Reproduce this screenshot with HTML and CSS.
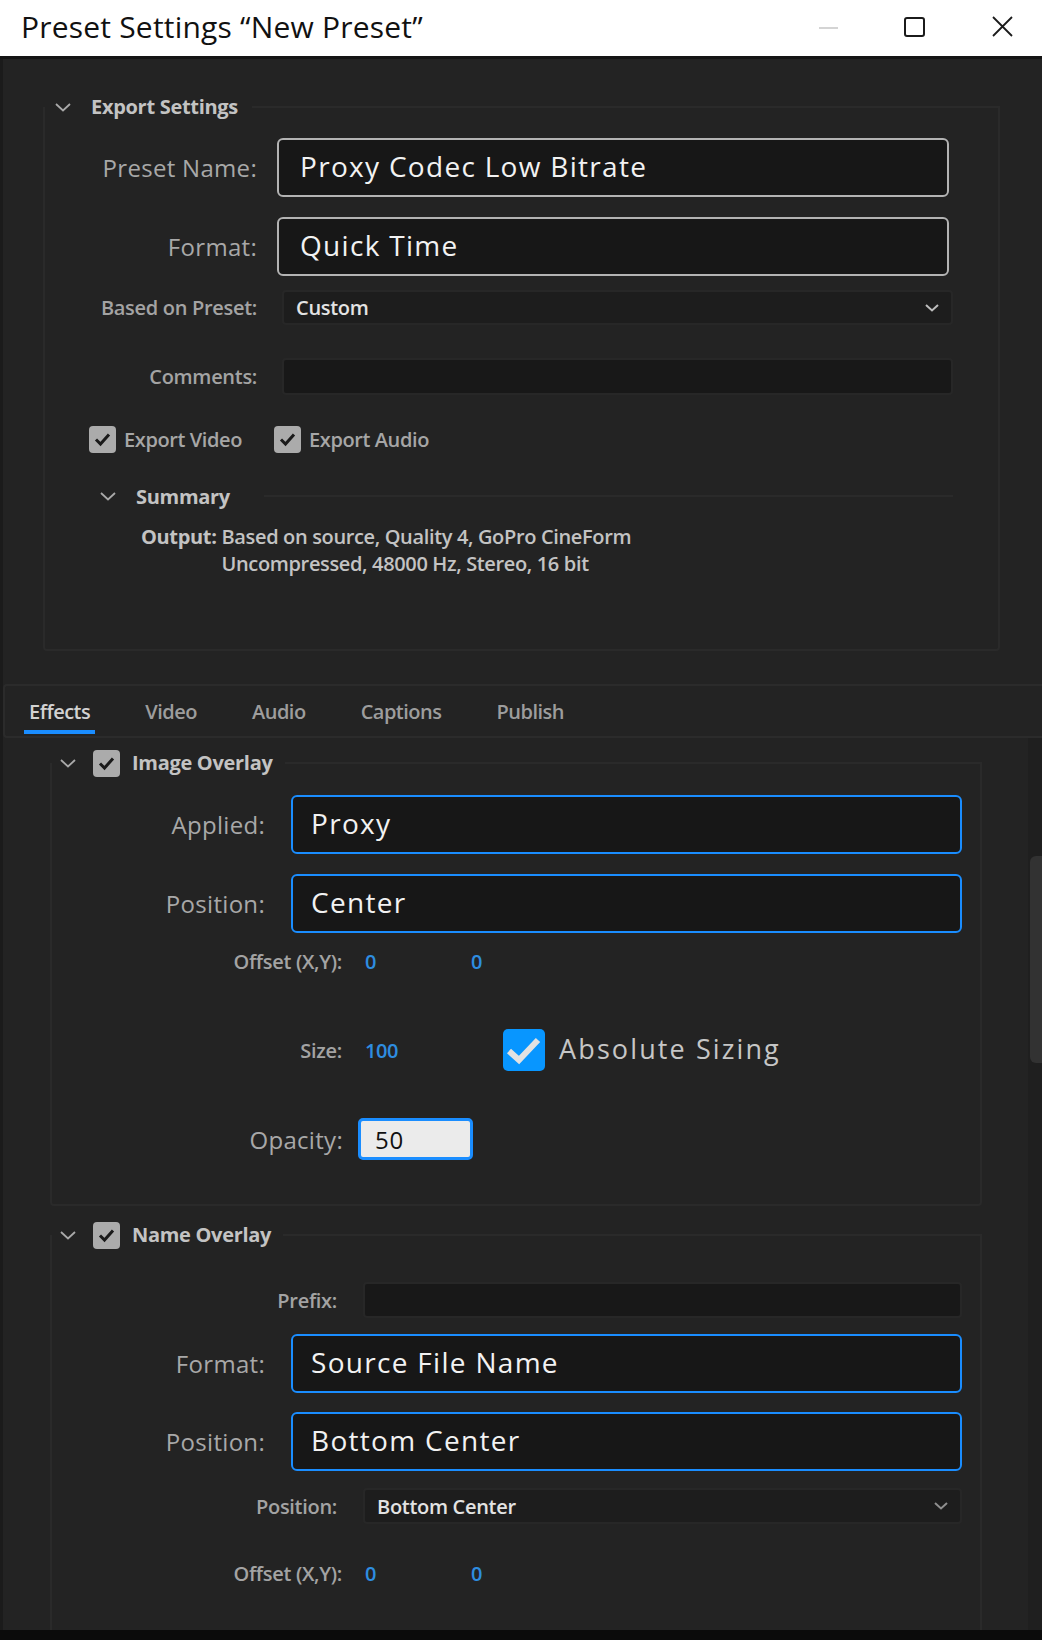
FILE: index.html
```html
<!DOCTYPE html>
<html lang="en">
<head>
<meta charset="utf-8">
<title>Preset Settings</title>
<link rel="stylesheet" href="styles.css">
</head>
<body>
<div class="window">
  <header class="titlebar">
    <div class="title">Preset Settings “New Preset”</div>
    <div class="controls">
      <svg class="ctl ctl-min" width="20" height="20" viewBox="0 0 20 20"><line x1="0" y1="11" x2="19" y2="11" stroke="#c9c9c9" stroke-width="1.6"/></svg>
      <svg class="ctl ctl-max" width="21" height="20" viewBox="0 0 21 20"><rect x="1" y="1" width="19" height="18" rx="2" fill="none" stroke="#1b1b1b" stroke-width="2"/></svg>
      <svg class="ctl ctl-close" width="21" height="21" viewBox="0 0 21 21"><path d="M1 1 L20 20 M20 1 L1 20" stroke="#1b1b1b" stroke-width="1.8" fill="none"/></svg>
    </div>
  </header>

  <main class="content">
    <section class="group export">
      <div class="group-head">
        <svg class="chev" width="16" height="9" viewBox="0 0 16 9"><path d="M1 1 L8 7.5 L15 1" fill="none" stroke="#a9a9a9" stroke-width="1.8"/></svg>
        <span class="group-title">Export Settings</span>
        <span class="rule"></span>
      </div>
      <div class="group-box export-box">
        <div class="row">
          <span class="lbl lbl-lg">Preset Name:</span>
          <div class="field-lg field-gray">Proxy Codec Low Bitrate</div>
        </div>
        <div class="row r-format">
          <span class="lbl lbl-lg">Format:</span>
          <div class="field-lg field-gray">Quick Time</div>
        </div>
        <div class="row r-based">
          <span class="lbl lbl-sm">Based on Preset:</span>
          <div class="field-sm select">
            <span class="sel-text">Custom</span>
            <svg class="sel-chev" width="14" height="8" viewBox="0 0 14 8"><path d="M1 1 L7 6.5 L13 1" fill="none" stroke="#bdbdbd" stroke-width="2"/></svg>
          </div>
        </div>
        <div class="row r-comments">
          <span class="lbl lbl-sm">Comments:</span>
          <div class="field-sm comments"></div>
        </div>
        <div class="row r-checks">
          <label class="chk-item">
            <span class="chk"><svg width="27" height="27" viewBox="0 0 27 27"><path d="M7 13.5 L11.5 18 L20 8.5" fill="none" stroke="#1a1a1a" stroke-width="3"/></svg></span>
            <span class="chk-text">Export Video</span>
          </label>
          <label class="chk-item chk-audio">
            <span class="chk"><svg width="27" height="27" viewBox="0 0 27 27"><path d="M7 13.5 L11.5 18 L20 8.5" fill="none" stroke="#1a1a1a" stroke-width="3"/></svg></span>
            <span class="chk-text">Export Audio</span>
          </label>
        </div>
        <div class="sub-head">
          <svg class="chev" width="16" height="9" viewBox="0 0 16 9"><path d="M1 1 L8 7.5 L15 1" fill="none" stroke="#a9a9a9" stroke-width="1.8"/></svg>
          <span class="sub-title">Summary</span>
          <span class="rule sub-rule"></span>
        </div>
        <div class="summary">
          <span class="sum-key">Output:</span>
          <div class="sum-val">
            <div>Based on source, Quality 4, GoPro CineForm</div>
            <div>Uncompressed, 48000 Hz, Stereo, 16 bit</div>
          </div>
        </div>
      </div>
    </section>

    <nav class="tabs">
      <span class="tab active">Effects</span>
      <span class="tab">Video</span>
      <span class="tab">Audio</span>
      <span class="tab">Captions</span>
      <span class="tab">Publish</span>
    </nav>

    <div class="pane">
      <div class="pane-inner">
        <section class="group fx">
          <div class="group-head fx-head">
            <svg class="chev" width="16" height="9" viewBox="0 0 16 9"><path d="M1 1 L8 7.5 L15 1" fill="none" stroke="#a9a9a9" stroke-width="1.8"/></svg>
            <span class="chk head-chk"><svg width="27" height="27" viewBox="0 0 27 27"><path d="M7 13.5 L11.5 18 L20 8.5" fill="none" stroke="#1a1a1a" stroke-width="3"/></svg></span>
            <span class="group-title fx-title">Image Overlay</span>
            <span class="rule"></span>
          </div>
          <div class="group-box img-box">
            <div class="row">
              <span class="lbl lbl-lg lw-lg">Applied:</span>
              <div class="field-lg field-blue">Proxy</div>
            </div>
            <div class="row r-gap20">
              <span class="lbl lbl-lg lw-lg">Position:</span>
              <div class="field-lg field-blue">Center</div>
            </div>
            <div class="row r-offset">
              <span class="lbl lbl-sm lw-sm">Offset (X,Y):</span>
              <span class="num">0</span>
              <span class="num num2">0</span>
            </div>
            <div class="row r-size">
              <span class="lbl lbl-sm lw-sm">Size:</span>
              <span class="num">100</span>
              <span class="bchk"><svg width="42" height="42" viewBox="0 0 42 42"><path d="M6 22 L16 31 L35 11" fill="none" stroke="#e2e2e2" stroke-width="6"/></svg></span>
              <span class="bchk-text">Absolute Sizing</span>
            </div>
            <div class="row r-opacity">
              <span class="lbl lbl-lg lw-op">Opacity:</span>
              <div class="opacity-input">50</div>
            </div>
          </div>
        </section>

        <section class="group fx name-group">
          <div class="group-head fx-head">
            <svg class="chev" width="16" height="9" viewBox="0 0 16 9"><path d="M1 1 L8 7.5 L15 1" fill="none" stroke="#a9a9a9" stroke-width="1.8"/></svg>
            <span class="chk head-chk"><svg width="27" height="27" viewBox="0 0 27 27"><path d="M7 13.5 L11.5 18 L20 8.5" fill="none" stroke="#1a1a1a" stroke-width="3"/></svg></span>
            <span class="group-title fx-title">Name Overlay</span>
            <span class="rule"></span>
          </div>
          <div class="group-box name-box">
            <div class="row">
              <span class="lbl lbl-sm lw-pre">Prefix:</span>
              <div class="field-sm2 comments"></div>
            </div>
            <div class="row r-gap16">
              <span class="lbl lbl-lg lw-lg">Format:</span>
              <div class="field-lg field-blue">Source File Name</div>
            </div>
            <div class="row r-gap19">
              <span class="lbl lbl-lg lw-lg">Position:</span>
              <div class="field-lg field-blue">Bottom Center</div>
            </div>
            <div class="row r-gap17">
              <span class="lbl lbl-sm lw-pre">Position:</span>
              <div class="field-sm2 select">
                <span class="sel-text">Bottom Center</span>
                <svg class="sel-chev" width="14" height="8" viewBox="0 0 14 8"><path d="M1 1 L7 6.5 L13 1" fill="none" stroke="#8f8f8f" stroke-width="2"/></svg>
              </div>
            </div>
            <div class="row r-offset2">
              <span class="lbl lbl-sm lw-sm">Offset (X,Y):</span>
              <span class="num">0</span>
              <span class="num num2">0</span>
            </div>
          </div>
        </section>
      </div>
      <div class="scrollbar"><div class="thumb"></div></div>
    </div>
  </main>
  <div class="bottom-bar"></div>
</div>
</body>
</html>
```

FILE: styles.css
```css
* { box-sizing: border-box; }
html, body { margin: 0; padding: 0; }
body {
  background: #232323;
  font-family: "Open Sans", "Noto Sans", sans-serif;
}
.window {
  width: 1042px;
  height: 1640px;
  display: flex;
  flex-direction: column;
  overflow: hidden;
  background: #232323;
}

/* title bar */
.titlebar {
  height: 59px;
  flex: none;
  background: #ffffff;
  border-bottom: 3px solid #151515;
  display: flex;
  align-items: center;
  padding-left: 21px;
}
.title {
  flex: 1;
  font-size: 30px;
  color: #111;
  letter-spacing: 0.2px;
  margin-top: -3px;
}
.controls {
  display: flex;
  align-items: center;
  padding-right: 29px;
  margin-top: -3px;
}
.ctl { display: block; }
.ctl-min { margin-right: 65px; }
.ctl-max { margin-right: 67px; }

/* main content */
.content {
  flex: 1;
  min-height: 0;
  display: flex;
  flex-direction: column;
  border-left: 3px solid #1b1b1b;
}
.bottom-bar {
  height: 10px;
  flex: none;
  background: #0b0b0b;
}

/* groups */
.group-head {
  display: flex;
  align-items: center;
  height: 24px;
  padding-left: 12px;
  position: relative;
}
.chev { display: block; flex: none; }
.group-title {
  margin-left: 20px;
  font-weight: 700;
  font-size: 20px;
  color: #c3c3c3;
  letter-spacing: -0.3px;
  white-space: nowrap;
  padding-bottom: 2px;
}
.rule {
  flex: 1;
  height: 2px;
  background: #2a2a2a;
  margin-left: 14px;
}
.group-box {
  margin-top: -12px;
  border: 2px solid #2a2a2a;
  border-top: none;
  border-radius: 0 0 4px 4px;
}
.export { margin: 36px 42px 0 40px; }
.export-box { padding: 31px 0 72px; }

.row { display: flex; align-items: center; }
.lbl {
  flex: none;
  text-align: right;
  white-space: nowrap;
}
.lbl-lg {
  width: 212px;
  font-size: 24px;
  color: #a8a8a8;
  letter-spacing: 0.3px;
}
.lbl-sm {
  width: 212px;
  font-size: 20px;
  font-weight: 600;
  color: #a3a3a3;
  letter-spacing: -0.3px;
}
.field-lg {
  margin-left: 20px;
  width: 672px;
  height: 59px;
  border-radius: 6px;
  background: #171717;
  display: flex;
  align-items: center;
  padding-left: 21px;
  padding-bottom: 3px;
  font-size: 28px;
  color: #f2f2f2;
  letter-spacing: 1.3px;
}
.field-gray { border: 2px solid #b3b3b3; }
.field-blue { border: 2px solid #1a8dff; }
.field-sm {
  margin-left: 25px;
  width: 671px;
  height: 35px;
  border: 2px solid #272727;
  border-radius: 4px;
  background: #1d1d1d;
  display: flex;
  align-items: center;
  justify-content: space-between;
  padding: 0 12px;
}
.field-sm.comments { height: 37px; background: #181818; }
.sel-text {
  font-size: 20px;
  font-weight: 600;
  color: #e3e3e3;
  letter-spacing: -0.3px;
}
.sel-chev { display: block; }
.r-format { margin-top: 20px; }
.r-based { margin-top: 14px; }
.r-comments { margin-top: 33px; }
.r-checks { margin-top: 31px; padding-left: 44px; }

.chk-item { display: flex; align-items: center; }
.chk-audio { margin-left: 32px; }
.chk {
  width: 27px;
  height: 27px;
  flex: none;
  background: #ababab;
  border-radius: 4px;
  display: block;
}
.chk svg { display: block; }
.chk-text {
  margin-left: 8px;
  font-size: 20px;
  font-weight: 600;
  color: #a6a6a6;
  letter-spacing: -0.4px;
}

.sub-head {
  display: flex;
  align-items: center;
  height: 24px;
  margin-top: 31px;
  padding-left: 55px;
  margin-right: 45px;
}
.sub-title {
  margin-left: 20px;
  font-weight: 700;
  font-size: 20px;
  color: #c3c3c3;
  letter-spacing: -0.3px;
}
.sub-rule { margin-left: 34px; }
.summary {
  display: flex;
  margin-top: 15px;
  padding-left: 96px;
  font-size: 20px;
  line-height: 27px;
  font-weight: 600;
  letter-spacing: -0.35px;
  color: #c3c3c3;
}
.sum-key { font-weight: 700; margin-right: 5px; }

/* tabs */
.tabs {
  margin-top: 33px;
  height: 54px;
  flex: none;
  display: flex;
  gap: 45px;
  border: 2px solid #2b2b2b;
  border-right: none;
  border-radius: 4px 0 0 4px;
  padding-left: 19px;
}
.tab {
  height: 48px;
  padding: 7px 5px 0;
  border-bottom: 4px solid transparent;
  display: flex;
  align-items: center;
  font-size: 20px;
  font-weight: 600;
  color: #9d9d9d;
  letter-spacing: -0.5px;
}
.tab.active {
  color: #d2d2d2;
  border-bottom-color: #1a8dff;
}

/* scrolling pane */
.pane {
  flex: 1;
  min-height: 0;
  display: flex;
}
.pane-inner {
  flex: 1;
  min-width: 0;
  overflow: hidden;
}
.scrollbar {
  width: 14px;
  flex: none;
  background: #1f1f1f;
  padding-top: 118px;
  padding-left: 2px;
}
.thumb {
  height: 207px;
  background: #323232;
  border-radius: 6px 0 0 6px;
}

.fx { margin: 13px 46px 0 47px; }
.fx-head { padding-left: 10px; }
.head-chk { margin-left: 17px; }
.fx-title { margin-left: 12px; }
.fx-head .rule { margin-left: 12px; }
.img-box { padding: 32px 0 44px; }
.lw-lg { width: 213px; }
.fx .field-lg { margin-left: 26px; width: 671px; padding-left: 18px; }
.r-gap20 { margin-top: 20px; }
.r-offset { margin-top: 16px; height: 24px; }
.lw-sm { width: 290px; }
.num {
  margin-left: 23px;
  font-size: 20px;
  font-weight: 600;
  color: #2e8de0;
  letter-spacing: -0.4px;
}
.num2 { margin-left: 95px; }
.r-size { margin-top: 56px; height: 42px; }
.bchk {
  margin-left: 105px;
  width: 42px;
  height: 42px;
  flex: none;
  background: #0896ff;
  border-radius: 5px;
  display: block;
}
.bchk svg { display: block; }
.bchk-text {
  margin-left: 14px;
  font-size: 27px;
  color: #c6c6c6;
  letter-spacing: 2.1px;
  padding-bottom: 3px;
}
.r-opacity { margin-top: 47px; }
.lw-op { width: 291px; }
.opacity-input {
  margin-left: 15px;
  width: 115px;
  height: 42px;
  border: 3px solid #1a8dff;
  border-radius: 5px;
  background: #ebebeb;
  color: #111;
  font-size: 24px;
  letter-spacing: 0.8px;
  display: flex;
  align-items: center;
  padding-left: 14px;
}

.name-group { margin-top: 17px; }
.name-box { padding: 47px 0 80px; }
.lw-pre { width: 285px; }
.field-sm2 {
  margin-left: 26px;
  width: 599px;
  height: 36px;
  border: 2px solid #272727;
  border-radius: 4px;
  background: #1d1d1d;
  display: flex;
  align-items: center;
  justify-content: space-between;
  padding: 0 12px;
}
.field-sm2.comments { background: #181818; }
.r-gap16 { margin-top: 16px; }
.r-gap19 { margin-top: 19px; }
.r-gap17 { margin-top: 17px; }
.r-offset2 { margin-top: 37px; height: 24px; }
```
